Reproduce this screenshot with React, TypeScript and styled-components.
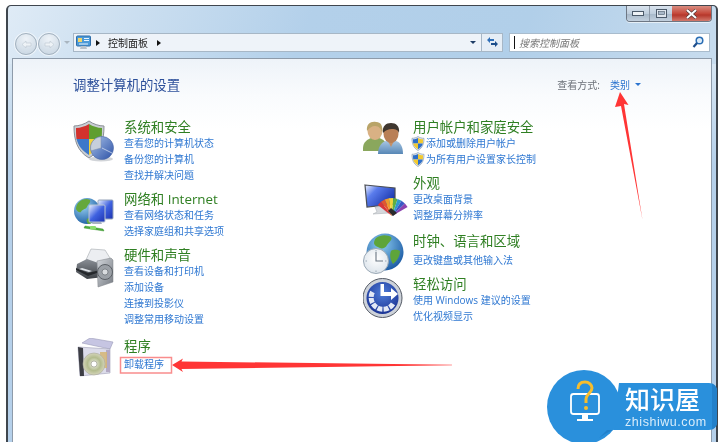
import React from "react";
import styled, { createGlobalStyle } from "styled-components";

const GlobalStyle = createGlobalStyle`
  html, body {
    margin: 0;
    padding: 0;
    background: #fff;
  }
  body {
    font-family: "Open Sans", "Noto Sans CJK SC", sans-serif;
  }
`;

const Page = styled.div`
  position: relative;
  width: 722px;
  height: 442px;
  overflow: hidden;
  padding: 5px 0 0 6px;
  box-sizing: border-box;
  background: #fff;
  filter: blur(0.3px);
`;

const Win = styled.div`
  width: 712px;
  height: 450px;
  box-sizing: border-box;
  border: 2px solid #3f464e;
  border-top-width: 1px;
  border-bottom: 0;
  border-radius: 5px 5px 0 0;
  background:
    linear-gradient(112deg, #dfebf6 0%, #cfe1f1 14%, #b3d0ea 42%, #b1cfe9 72%, #c8dcee 100%) top / 100% 58px no-repeat,
    linear-gradient(#d9e7f3 50px, #b5d0ea 160px);
`;

const TitleBar = styled.div`
  display: flex;
  justify-content: flex-end;
  height: 27px;
  padding-right: 4px;
`;

const Controls = styled.div`
  display: flex;
  height: 15px;
  border: 1px solid #6d7784;
  border-top: 0;
  border-radius: 0 0 4px 4px;
  overflow: hidden;
  box-shadow: 0 1px 0 rgba(255, 255, 255, 0.6);
`;

const CtrlBtn = styled.div<{ $w: number; $close?: boolean }>`
  display: flex;
  align-items: center;
  justify-content: center;
  width: ${(p) => p.$w}px;
  border-left: ${(p) => (p.$close ? "0" : "1px solid #8d99a8")};
  background: ${(p) =>
    p.$close
      ? "linear-gradient(#d98c80, #c4483a 50%, #b5372b 60%, #d2796c)"
      : "linear-gradient(#d9e3ee, #bfcedd 50%, #a8b9ca 55%, #c2d0de)"};
  &:first-child {
    border-left: 0;
  }
`;

const Toolbar = styled.div`
  display: flex;
  align-items: flex-start;
  height: 19px;
  margin-bottom: 6px;
  padding: 0 6px 0 7px;
`;

const NavButton = styled.div`
  flex: none;
  width: 22px;
  height: 22px;
  margin-right: 1px;
  border: 1px solid #a3b1be;
  border-radius: 50%;
  box-sizing: border-box;
  display: flex;
  align-items: center;
  justify-content: center;
  background: radial-gradient(circle at 50% 25%, #eef3f8, #cfdbe6 75%);
  box-shadow: 0 0 0 1px rgba(255, 255, 255, 0.55);
`;

const NavDrop = styled.div`
  flex: none;
  width: 12px;
  height: 19px;
  display: flex;
  align-items: center;
  justify-content: center;
`;

const AddressBar = styled.div`
  flex: 1;
  height: 19px;
  box-sizing: border-box;
  display: flex;
  align-items: center;
  border: 1px solid #a7b7c6;
  background: #eef3f9;
  font-size: 10px;
  color: #222;
  padding-left: 2px;
`;

const Crumb = styled.span`
  margin: 0 9px 0 8px;
`;

const CrumbArrow = styled.span`
  display: flex;
  margin-left: 5px;
`;

const Tri = styled.span<{ $dir: "right" | "down"; $color?: string }>`
  flex: none;
  width: 0;
  height: 0;
  border-style: solid;
  ${(p) =>
    p.$dir === "right"
      ? `border-width: 3.5px 0 3.5px 4px; border-color: transparent transparent transparent ${p.$color || "#111"};`
      : `border-width: 3.5px 3.5px 0 3.5px; border-color: ${p.$color || "#1d3c66"} transparent transparent transparent;`}
`;

const AddrSpacer = styled.div`
  flex: 1;
`;

const AddrDrop = styled.div`
  width: 13px;
  display: flex;
  justify-content: center;
  margin-right: 2px;
`;

const RefreshBtn = styled.div`
  flex: none;
  width: 21px;
  height: 19px;
  box-sizing: border-box;
  border: 1px solid #a7b7c6;
  border-left: 0;
  background: #e6eef6;
  display: flex;
  align-items: center;
  justify-content: center;
`;

const SearchBox = styled.div`
  flex: none;
  width: 201px;
  height: 19px;
  margin-left: 6px;
  box-sizing: border-box;
  border: 1px solid #a9bccd;
  background: #fff;
  display: flex;
  align-items: center;
  padding: 0 5px 0 4px;
  font-size: 10px;
  font-style: italic;
  color: #7a7a7a;
`;

const Caret = styled.span`
  width: 1px;
  height: 13px;
  background: #111;
  margin-right: 4px;
`;

const Panel = styled.div`
  margin: 0 4px;
  height: 400px;
  box-sizing: border-box;
  border: 1px solid #8e9baa;
  border-bottom: 0;
  background: linear-gradient(#eef3f9, #f9fbfd 36px, #fff 70px);
  padding: 16px 70px 0 60px;
`;

const PanelHead = styled.div`
  display: flex;
  justify-content: space-between;
  align-items: center;
  height: 20px;
  margin-bottom: 24px;
`;

const PageTitle = styled.h1`
  margin: 0;
  font-size: 13.4px;
  font-weight: 400;
  line-height: 20px;
  color: #2c4f9a;
`;

const ViewBy = styled.div`
  display: flex;
  align-items: center;
  font-size: 10px;
  color: #6b7078;
  margin-top: -2px;
`;

const ViewValue = styled.span`
  color: #2b74cf;
  font-size: 10px;
  margin: 0 5px 0 10px;
`;

const Columns = styled.div`
  display: grid;
  grid-template-columns: 290px 1fr;
`;

const Column = styled.div`
  display: flex;
  flex-direction: column;
`;

const Category = styled.div<{ $after: number }>`
  display: flex;
  margin-bottom: ${(p) => p.$after}px;
`;

const IconSlot = styled.div<{ $w: number }>`
  flex: none;
  width: ${(p) => p.$w}px;
  height: 0;
  svg {
    display: block;
  }
`;

const Heading = styled.div<{ $gap?: number }>`
  font-size: 13.4px;
  line-height: 16px;
  color: #2f7f22;
  margin-bottom: ${(p) => p.$gap || 0}px;
`;

const TaskLink = styled.div<{ $shield?: boolean }>`
  display: flex;
  align-items: center;
  font-size: 10px;
  line-height: 16px;
  height: 16px;
  color: #2f78d2;
  margin-left: ${(p) => (p.$shield ? "-2px" : "0")};
  svg {
    margin-right: 1px;
  }
`;

const Annotations = styled.svg`
  position: absolute;
  left: 0;
  top: 0;
  pointer-events: none;
`;

const Badge = styled.div`
  position: absolute;
  left: 547px;
  top: 370px;
  width: 175px;
  height: 72px;
  box-sizing: border-box;
  padding: 15px 0 0 78px;
  color: #fff;
  svg {
    position: absolute;
    left: 0;
    top: 0;
  }
`;

const BadgeName = styled.div`
  position: relative;
  font-size: 25px;
  font-weight: 500;
  line-height: 28px;
  white-space: nowrap;
`;

const BadgeUrl = styled.div`
  position: relative;
  margin-top: 3px;
  font-family: "Liberation Sans", sans-serif;
  font-size: 12.5px;
  letter-spacing: 0.55px;
  line-height: 12px;
  white-space: nowrap;
  color: #d8ecfa;
`;

const MiniShield = () => (
  <svg width="14" height="15" viewBox="0 0 14 15">
    <path d="M7 .5C5.4 1.7 3 2.3 1 2.3c0 5 1.2 9.5 6 12.2 4.8-2.7 6-7.2 6-12.2-2 0-4.4-.6-6-1.8z" fill="#dfe6ee" stroke="#8b9cb0" strokeWidth=".7" />
    <path d="M7 2v5.5H2.2C2 6 2 4.6 2 3.3 3.8 3.2 5.600 2.800 7 2z" fill="#2e6fc9" />
    <path d="M7 2v5.500h4.800c.2-1.500.2-2.900.2-4.200C10.200 3.200 8.400 2.800 7 2z" fill="#f2c92f" />
    <path d="M2.200 7.500H7v5.800C4.100 11.600 2.700 9.800 2.200 7.500z" fill="#f2c92f" />
    <path d="M11.800 7.500H7v5.800c2.900-1.700 4.300-3.500 4.800-5.800z" fill="#2e6fc9" />
  </svg>
);

const SecurityIcon = () => (
  <svg width="48" height="48" viewBox="0 0 48 48">
    <defs>
      <linearGradient id="pieG" x1="0" y1="0" x2="1" y2="1">
        <stop offset="0" stopColor="#a9c3ea" />
        <stop offset="1" stopColor="#2c50a5" />
      </linearGradient>
    </defs>
    <path d="M16 2C12 5 6 7 1 7c0 14 3 25 15 32 12-7 15-18 15-32-5 0-11-2-15-5z" fill="#c9ced4" stroke="#8b8f96" />
    <path d="M16 5v15H3.500C3 16 3 12.500 3 9c4.500-.2 9-1.500 13-4z" fill="#d2322d" />
    <path d="M16 5v15h12.500C29 16 29 12.500 29 9c-4.500-.2-9-1.500-13-4z" fill="#5f9e2f" />
    <path d="M3.500 20H16v16C9 31.500 5 26.500 3.500 20z" fill="#3c78c9" />
    <path d="M28.500 20H16v16c7-4.500 11-9.500 12.500-16z" fill="#f3d43a" />
    <ellipse cx="28" cy="40" rx="12" ry="2.500" fill="#9aa0a8" opacity=".45" />
    <circle cx="29" cy="29" r="11.500" fill="url(#pieG)" stroke="#4d6aa8" strokeWidth=".6" />
    <path d="M28 29V17.800a11 11 0 0 0-10 14z" fill="#c7cfdb" stroke="#7f8ea8" strokeWidth=".5" />
    <path d="M29 29l10 5" stroke="#dfe8f6" strokeWidth=".7" />
  </svg>
);

const NetworkIcon = () => (
  <svg width="48" height="48" viewBox="0 0 48 48">
    <defs>
      <radialGradient id="netG" cx=".35" cy=".3" r=".8">
        <stop offset="0" stopColor="#9ad2f2" />
        <stop offset="1" stopColor="#14569f" />
      </radialGradient>
      <linearGradient id="netS" x1="0" y1="0" x2="1" y2="1">
        <stop offset="0" stopColor="#eaf2ff" />
        <stop offset=".5" stopColor="#3f62e0" />
        <stop offset="1" stopColor="#1c33b0" />
      </linearGradient>
    </defs>
    <circle cx="14" cy="20" r="13" fill="url(#netG)" />
    <path d="M6 11c3-3 8-4 11-2 1 3-2 4-3 7-2 3-5 2-6 5-2 1-4-1-5-3 0-3 1-5 3-7zM14 28c2-2 5-1 6 1-1 3-3 4-5 4-1-2-2-3-1-5z" fill="#65a83b" />
    <rect x="25" y="9" width="15" height="19" rx="1" fill="url(#netS)" stroke="#94a3b8" />
    <rect x="16" y="14" width="16" height="17" rx="1" fill="url(#netS)" stroke="#b7c4d4" />
    <path d="M20 31h8l1 2h-10z" fill="#aab4c0" />
    <path d="M12 35l18 3 1 2-20-3z" fill="#4fb13a" stroke="#2b8323" strokeWidth=".4" />
    <rect x="17" y="35" width="6" height="3.500" rx="1" fill="#8ddd6e" />
  </svg>
);

const PrinterIcon = () => (
  <svg width="48" height="48" viewBox="0 0 48 48">
    <defs>
      <linearGradient id="prnB" x1="0" y1="0" x2="0" y2="1">
        <stop offset="0" stopColor="#8a8f96" />
        <stop offset="1" stopColor="#3d4146" />
      </linearGradient>
      <linearGradient id="spkB" x1="0" y1="0" x2="1" y2="1">
        <stop offset="0" stopColor="#d3d7dc" />
        <stop offset="1" stopColor="#767b82" />
      </linearGradient>
    </defs>
    <path d="M18 2l14 1 5 8-8 10-17-6z" fill="#eceef1" stroke="#a5a9ae" strokeWidth=".6" />
    <path d="M4 17l10-5 17 6v12L14 32 3 25z" fill="url(#prnB)" />
    <path d="M3 21l12 5 12-3v2l-12 4-12-6z" fill="#25282c" />
    <path d="M6 22l10 3 3-1-10-3z" fill="#dfe3e8" />
    <path d="M24 14l14-3 2 2v22l-15 5z" fill="url(#spkB)" stroke="#7c8087" strokeWidth=".5" />
    <circle cx="32" cy="25" r="7.500" fill="#9ba0a6" stroke="#5b6066" />
    <circle cx="32" cy="25" r="3" fill="#d9dcdf" stroke="#5b6066" strokeWidth=".6" />
  </svg>
);

const ProgramsIcon = () => (
  <svg width="48" height="48" viewBox="0 0 48 48">
    <defs>
      <radialGradient id="cdG" cx=".5" cy=".5" r=".6">
        <stop offset="0" stopColor="#f5f5ee" />
        <stop offset=".5" stopColor="#b3bc8e" />
        <stop offset="1" stopColor="#e5e1cf" />
      </radialGradient>
    </defs>
    <path d="M9 5l8-5 23 4-3 7z" fill="#c6c5e2" stroke="#9a9ab8" strokeWidth=".6" />
    <path d="M5 9l32 2v24L7 38z" fill="#dcdcea" stroke="#9d9db5" strokeWidth=".6" />
    <path d="M5 9l5 1 1 28H7z" fill="#3c3d44" />
    <path d="M33 12h4v22h-4z" fill="#b3a9c4" />
    <rect x="27" y="14" width="7" height="16" fill="#d5b574" opacity=".85" />
    <circle cx="21" cy="26" r="11" fill="url(#cdG)" stroke="#a7a898" strokeWidth=".6" />
    <circle cx="21" cy="26" r="3" fill="#fff" stroke="#8e907f" strokeWidth=".6" />
  </svg>
);

const UsersIcon = () => (
  <svg width="48" height="48" viewBox="0 0 48 48">
    <defs>
      <linearGradient id="uShirt" x1="0" y1="0" x2="0" y2="1">
        <stop offset="0" stopColor="#a7c5e2" />
        <stop offset="1" stopColor="#5787b6" />
      </linearGradient>
    </defs>
    <path d="M0 29c0-6 5-9 8-10h8c4 1 8 4 8 10v3H0z" fill="#8aa75d" />
    <ellipse cx="12" cy="12" rx="7.500" ry="9" fill="#d9b184" />
    <path d="M4 12c-1-7 4-10 9-9 5 0 7 4 6 10-1-3-3-6-7-6-3 0-6 2-8 5z" fill="#b9a468" />
    <path d="M15 35c0-8 4-12 8-13h10c4 1 7 5 7 13z" fill="url(#uShirt)" />
    <path d="M25 22l3 6 3-6z" fill="#c58f66" />
    <ellipse cx="28" cy="15" rx="7.500" ry="9" fill="#b97f56" />
    <path d="M20 14c-1-7 3-10 8-10s9 3 8 10c-1-3-3-4-7-4-4 0-6 1-9 4z" fill="#3f372f" />
  </svg>
);

// colour fan, blades spread around the pivot at the lower right of the monitor
const fanColors = ["#d8353a", "#e2562f", "#ee9a2c", "#efd53a", "#5db042", "#2e9ac9", "#3a58c4", "#8a42ae"];
const fanBlade = (i: number) => {
  const pt = (deg: number) => {
    const a = (deg * Math.PI) / 180;
    return `${(29 + 18 * Math.sin(a)).toFixed(1)},${(41 - 18 * Math.cos(a)).toFixed(1)}`;
  };
  const from = -52 + i * 14;
  return `29,41 ${pt(from)} ${pt(from + 14)}`;
};

const AppearanceIcon = () => (
  <svg width="48" height="48" viewBox="0 0 48 48">
    <defs>
      <linearGradient id="scrG" x1="0" y1="0" x2="1" y2=".7">
        <stop offset="0" stopColor="#f2f6ff" />
        <stop offset=".35" stopColor="#5a7cec" />
        <stop offset="1" stopColor="#1430a8" />
      </linearGradient>
    </defs>
    <path d="M2 10l30 3v16L4 32z" fill="url(#scrG)" stroke="#4a4e55" strokeWidth="1.200" />
    <path d="M12 32l9-1 1 5 4 2-16 1 4-2z" fill="#d5d8dc" stroke="#a3a8ae" strokeWidth=".5" />
    {fanColors.map((c, i) => (
      <polygon key={c} points={fanBlade(i)} fill={c} />
    ))}
    <path d="M25 36l5 5 4-3-6-5z" fill="#2a2a2c" />
  </svg>
);

const ClockIcon = () => (
  <svg width="48" height="48" viewBox="0 0 48 48">
    <defs>
      <radialGradient id="glbG" cx=".4" cy=".3" r=".8">
        <stop offset="0" stopColor="#8fcff2" />
        <stop offset="1" stopColor="#0f4e9c" />
      </radialGradient>
      <radialGradient id="clkG" cx=".5" cy=".4" r=".7">
        <stop offset="0" stopColor="#ffffff" />
        <stop offset="1" stopColor="#d7e0e8" />
      </radialGradient>
    </defs>
    <circle cx="22" cy="19" r="18.500" fill="url(#glbG)" />
    <path d="M13 5c5-4 12-3 15-1 2 3-2 5-4 8-1 3-5 4-7 3-3-1-6-3-6-5 0-2 1-4 2-5zM28 18c3-2 7-1 9 0 0 5-3 10-7 13-2-3-4-8-2-13z" fill="#5ea53a" />
    <circle cx="13" cy="28" r="12.500" fill="url(#clkG)" stroke="#9aa8b5" />
    <path d="M13 19v9h7" fill="none" stroke="#6a7682" strokeWidth="1.100" />
    <path d="M13 17v1.500M13 37.500V39M2.500 28H4M22 28h1.500" stroke="#9aa8b5" />
  </svg>
);

const EaseIcon = () => (
  <svg width="48" height="48" viewBox="0 0 48 48">
    <defs>
      <radialGradient id="easeG" cx=".5" cy=".35" r=".75">
        <stop offset="0" stopColor="#4f7dd8" />
        <stop offset="1" stopColor="#13298a" />
      </radialGradient>
    </defs>
    <circle cx="19.500" cy="22" r="19.500" fill="#cdd2d9" stroke="#555b66" />
    <circle cx="19.500" cy="22" r="16" fill="url(#easeG)" />
    <path d="M9.500 16A11.500 11.500 0 1 0 30.500 27" fill="none" stroke="#e3e9f5" strokeWidth="5" strokeDasharray="5 1.200" />
    <path d="M17.500 8H21v8h7v-4l7 6-7 6v-4H17.500z" fill="#fff" />
  </svg>
);

const columns = [
  [
    { icon: <SecurityIcon />, title: "系统和安全", after: 8, links: ["查看您的计算机状态", "备份您的计算机", "查找并解决问题"] },
    { icon: <NetworkIcon />, title: "网络和 Internet", after: 8, links: ["查看网络状态和任务", "选择家庭组和共享选项"] },
    { icon: <PrinterIcon />, title: "硬件和声音", after: 11, links: ["查看设备和打印机", "添加设备", "连接到投影仪", "调整常用移动设置"] },
    { icon: <ProgramsIcon />, title: "程序", after: 0, gap: 2, links: ["卸载程序"] },
  ],
  [
    { icon: <UsersIcon />, title: "用户帐户和家庭安全", after: 8, shield: true, links: ["添加或删除用户帐户", "为所有用户设置家长控制"] },
    { icon: <AppearanceIcon />, title: "外观", after: 10, links: ["更改桌面背景", "调整屏幕分辨率"] },
    { icon: <ClockIcon />, title: "时钟、语言和区域", after: 8, gap: 3, links: ["更改键盘或其他输入法"] },
    { icon: <EaseIcon />, title: "轻松访问", after: 0, links: ["使用 Windows 建议的设置", "优化视频显示"] },
  ],
];

export default function App() {
  return (
    <Page>
      <GlobalStyle />
      <Win>
        <TitleBar>
          <Controls>
            <CtrlBtn $w={22}>
              <svg width="12" height="6" viewBox="0 0 12 6"><rect x=".5" y=".5" width="11" height="4" fill="#eef2f6" stroke="#4c5a6a" /></svg>
            </CtrlBtn>
            <CtrlBtn $w={22}>
              <svg width="11" height="9" viewBox="0 0 11 9"><rect x=".5" y=".5" width="10" height="8" fill="#dfe6ee" stroke="#4c5a6a" /><rect x="2.500" y="2.500" width="6" height="3" fill="#a9b8c8" stroke="#4c5a6a" strokeWidth=".6" /></svg>
            </CtrlBtn>
            <CtrlBtn $w={39} $close>
              <svg width="13" height="10" viewBox="0 0 13 10"><path d="M2 1l9 8M11 1L2 9" stroke="#4a3a3a" strokeWidth="3.200" /><path d="M2 1l9 8M11 1L2 9" stroke="#fff" strokeWidth="2" /></svg>
            </CtrlBtn>
          </Controls>
        </TitleBar>
        <Toolbar>
          <NavButton>
            <svg width="11" height="9" viewBox="0 0 11 9"><path d="M1 4.500L5 1v2h5v3H5v2z" fill="#eef3f7" stroke="#bcc8d2" strokeWidth=".6" /></svg>
          </NavButton>
          <NavButton>
            <svg width="11" height="9" viewBox="0 0 11 9"><path d="M10 4.500L6 1v2H1v3h5v2z" fill="#eef3f7" stroke="#bcc8d2" strokeWidth=".6" /></svg>
          </NavButton>
          <NavDrop>
            <Tri $dir="down" $color="#a9b5c0" />
          </NavDrop>
          <AddressBar>
            <svg width="15" height="16" viewBox="0 0 15 16">
              <rect x=".5" y="1" width="14" height="10" rx="1" fill="#4c9ad8" stroke="#2f6da8" />
              <rect x="2" y="3" width="4" height="4" fill="#f0d46a" />
              <path d="M8 3.500h5M8 5.500h5M3 9h9" stroke="#eaf5ff" />
              <path d="M5 11h5l1 3H4z" fill="#b9c2cb" />
            </svg>
            <CrumbArrow>
              <Tri $dir="right" />
            </CrumbArrow>
            <Crumb>控制面板</Crumb>
            <Tri $dir="right" />
            <AddrSpacer />
            <AddrDrop>
              <Tri $dir="down" />
            </AddrDrop>
          </AddressBar>
          <RefreshBtn>
            <svg width="13" height="13" viewBox="0 0 13 13">
              <path d="M1 4l3-3v2h4v2H4v2z" fill="#2f6fb8" />
              <path d="M12 8L9 5v2H5v2h4v2z" fill="#1d4f8c" />
            </svg>
          </RefreshBtn>
          <SearchBox>
            <Caret />
            搜索控制面板
            <AddrSpacer />
            <svg width="12" height="13" viewBox="0 0 12 13">
              <circle cx="7.500" cy="4.500" r="3.300" fill="#dcecf9" stroke="#2a6db4" strokeWidth="1.500" />
              <path d="M5 7l-3.500 4" stroke="#1f4f8c" strokeWidth="2.200" />
            </svg>
          </SearchBox>
        </Toolbar>
        <Panel>
          <PanelHead>
            <PageTitle>调整计算机的设置</PageTitle>
            <ViewBy>
              查看方式:
              <ViewValue>类别</ViewValue>
              <Tri $dir="down" $color="#2b74cf" />
            </ViewBy>
          </PanelHead>
          <Columns>
            {columns.map((col, c) => (
              <Column key={c}>
                {col.map((cat) => (
                  <Category key={cat.title} $after={cat.after}>
                    <IconSlot $w={c === 0 ? 51 : 50}>{cat.icon}</IconSlot>
                    <div>
                      <Heading $gap={cat.gap}>{cat.title}</Heading>
                      {cat.links.map((l) => (
                        <TaskLink key={l} $shield={cat.shield}>
                          {cat.shield && <MiniShield />}
                          {l}
                        </TaskLink>
                      ))}
                    </div>
                  </Category>
                ))}
              </Column>
            ))}
          </Columns>
        </Panel>
      </Win>
      <Annotations width="722" height="442" viewBox="0 0 722 442">
        <polygon points="620,92 628.500,105 624,104 642.500,220 621,106 615,107" fill="#ff3535" />
        <polygon points="172,365 183,358.500 181.500,361.500 452,364.700 452,365.300 181.500,369 183,372" fill="#ff3535" />
        <rect x="120.500" y="357.500" width="51" height="15.500" fill="none" stroke="#f98d8d" strokeWidth="1.500" />
      </Annotations>
      <Badge>
        <svg width="175" height="72" viewBox="0 0 175 72">
          <path d="M72 13h90a8 8 0 0 1 8 8v31a8 8 0 0 1-8 8H66z" fill="#2a90dc" />
          <path d="M165 13.500a8 8 0 0 1 5 7.500v31a8 8 0 0 1-5 7.500z" fill="#2280ca" />
          <circle cx="37" cy="37" r="37" fill="#2a90dc" />
          <path d="M60 60h6l-8 4-6 4z" fill="#2280ca" />
          <rect x="24" y="24" width="28" height="20" rx="2.500" fill="none" stroke="#fff" strokeWidth="1.800" />
          <path d="M35 44h6v5h5v2H30v-2h5z" fill="#fff" />
          <path d="M31 19c0-5 3-7 7-7s7 3 7 6c0 5-6 6-6 11v4" fill="none" stroke="#f8bd2c" strokeWidth="3" />
          <circle cx="39" cy="38" r="2" fill="#f8bd2c" />
        </svg>
        <BadgeName>知识屋</BadgeName>
        <BadgeUrl>zhishiwu.com</BadgeUrl>
      </Badge>
    </Page>
  );
}
